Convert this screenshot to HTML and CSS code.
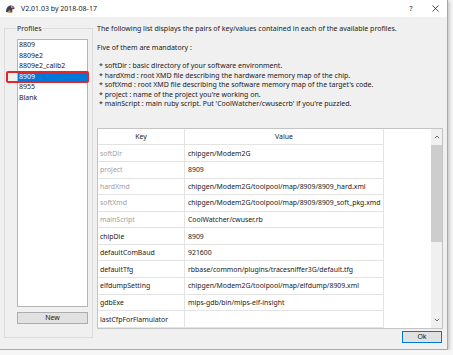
FILE: index.html
```html
<!DOCTYPE html>
<html lang="en">
<head>
    <meta charset="UTF-8">
    <title>V2.01.03 by 2018-08-17</title>
    <link rel="stylesheet" href="styles.css">
</head>
<body>

    <div class="window">

        <!-- Title bar -->
        <div class="titlebar">
            <svg class="app-icon" viewBox="0 0 10 10">
                <path d="M1 8 C1 4 3 1.5 6 1.5 C8 1.5 9.5 3 9.5 5 L7 5.5 L7.5 8.5 Z" fill="#35415c"/>
                <path d="M6.5 2 L9.5 3.5 L7.5 5 Z" fill="#d9482b"/>
                <path d="M2 8.5 L5 5.5 L6 9 Z" fill="#e8912d"/>
                <circle cx="6.8" cy="3" r="0.7" fill="#fff"/>
            </svg>
            <span class="title">V2.01.03 by 2018-08-17</span>
            <span class="tb-btn">?</span>
            <span class="tb-btn">
                <svg class="close-x" viewBox="0 0 8 8"><path d="M0.5 0.5 L7.5 7.5 M7.5 0.5 L0.5 7.5" stroke="#222" stroke-width="0.9"/></svg>
            </span>
        </div>

        <div class="client">

            <!-- Profiles list -->
            <fieldset class="profiles">
                <legend>Profiles</legend>
                <ul class="listbox">
                    <li>8809</li>
                    <li>8809e2</li>
                    <li>8809e2_calib2</li>
                    <li class="selected">8909<span class="mark"></span></li>
                    <li>8955</li>
                    <li>Blank</li>
                </ul>
                <button class="btn btn-new">New</button>
            </fieldset>

            <!-- Description and key/value grid -->
            <div class="main">
                <p class="line">The following list displays the pairs of key/values contained in each of the available profiles.</p>
                <p class="line gap">Five of them are mandatory :</p>
                <ul class="bullets">
                    <li>* softDir : basic directory of your software environment.</li>
                    <li>* hardXmd : root XMD file describing the hardware memory map of the chip.</li>
                    <li>* softXmd : root XMD file describing the software memory map of the target's code.</li>
                    <li>* project : name of the project you're working on.</li>
                    <li>* mainScript : main ruby script. Put 'CoolWatcher/cwusecrb' if you're puzzled.</li>
                </ul>

                <div class="grid">
                    <div class="grid-body">
                        <table class="kv">
                            <colgroup>
                                <col class="col-key">
                                <col class="col-value">
                            </colgroup>
                            <tr><th>Key</th><th>Value</th></tr>
                            <tr class="fixed"><td>softDir</td><td>chipgen/Modem2G</td></tr>
                            <tr class="fixed"><td>project</td><td>8909</td></tr>
                            <tr class="fixed"><td>hardXmd</td><td>chipgen/Modem2G/toolpool/map/8909/8909_hard.xml</td></tr>
                            <tr class="fixed"><td>softXmd</td><td>chipgen/Modem2G/toolpool/map/8909/8909_soft_pkg.xmd</td></tr>
                            <tr class="fixed"><td>mainScript</td><td>CoolWatcher/cwuser.rb</td></tr>
                            <tr><td>chipDie</td><td>8909</td></tr>
                            <tr><td>defaultComBaud</td><td>921600</td></tr>
                            <tr><td>defaultTfg</td><td>rbbase/common/plugins/tracesniffer3G/default.tfg</td></tr>
                            <tr><td>elfdumpSetting</td><td>chipgen/Modem2G/toolpool/map/elfdump/8909.xml</td></tr>
                            <tr><td>gdbExe</td><td>mips-gdb/bin/mips-elf-insight</td></tr>
                            <tr><td>lastCfpForFlamulator</td><td></td></tr>
                        </table>
                    </div>
                    <div class="scrollbar">
                        <div class="sb-arrow">
                            <svg viewBox="0 0 6 4"><path d="M0.8 3.2 L3 1 L5.2 3.2" fill="none" stroke="#606060" stroke-width="0.9"/></svg>
                        </div>
                        <div class="sb-thumb"></div>
                        <div class="sb-track"></div>
                        <div class="sb-arrow">
                            <svg viewBox="0 0 6 4"><path d="M0.8 0.8 L3 3 L5.2 0.8" fill="none" stroke="#606060" stroke-width="0.9"/></svg>
                        </div>
                    </div>
                </div>

                <div class="actions">
                    <button class="btn btn-ok">Ok</button>
                </div>
            </div>

        </div>
    </div>

</body>
</html>
```

FILE: styles.css
```css
* {
    box-sizing: border-box;
}

body {
    margin: 0;
    background-color: #f6f6f6;
    font-family: "Noto Sans", "Liberation Sans", sans-serif;
    font-size: 7px;
    color: #1a1a1a;
}

/* Dialog window */
.window {
    width: 448px;
    height: 350px;
    display: flex;
    flex-direction: column;
    background-color: #f0f0f0;
    border-right: 1px solid #a9a9a9;
    border-bottom: 1px solid #a9a9a9;
    box-shadow: 1px 1px 4px rgba(0, 0, 0, 0.25);
}

/* Title bar */
.titlebar {
    height: 17px;
    display: flex;
    align-items: center;
    padding-left: 5px;
    background-color: #fff;
}

.app-icon {
    width: 10px;
    height: 10px;
    margin-right: 6px;
}

.title {
    flex: 1;
}

.tb-btn {
    width: 24px;
    display: flex;
    justify-content: center;
    align-items: center;
    font-size: 7px;
    color: #222;
}

.close-x {
    width: 7px;
    height: 7px;
}

/* Client area */
.client {
    flex: 1;
    display: flex;
    padding: 7px 4px 0 4px;
}

/* Profiles group box */
.profiles {
    margin: 0;
    width: 89px;
    align-self: flex-start;
    padding: 6px 4px 13px 12px;
    border: 1px solid #dcdcdc;
}

.profiles legend {
    margin-left: -1px;
    padding: 0 1px;
    line-height: 9px;
}

.listbox {
    height: 268px;
    margin: 0;
    padding: 0;
    list-style: none;
    background-color: #fff;
    border: 1px solid #b5b5b5;
}

.listbox li {
    position: relative;
    line-height: 10.5px;
    padding-left: 1px;
}

.listbox li.selected {
    background-color: #0078d7;
    color: #fff;
}

/* red highlight drawn over the selected profile */
.mark {
    position: absolute;
    left: -12px;
    right: -2px;
    top: -1px;
    bottom: -1px;
    border: 2px solid #e3262b;
    border-radius: 2px;
}

/* Buttons */
.btn {
    display: block;
    padding: 0;
    font-family: inherit;
    font-size: 7px;
    line-height: 10px;
    color: #1a1a1a;
    background-color: #e1e1e1;
    border: 1px solid #adadad;
}

.btn-new {
    width: 71px;
    height: 12px;
    margin-top: 5px;
}

.btn-ok {
    width: 40px;
    height: 12px;
    border-color: #0078d7;
}

/* Right column */
.main {
    flex: 1;
    margin-left: 4px;
    display: flex;
    flex-direction: column;
}

.line {
    margin: 0;
    line-height: 9.6px;
}

.line.gap {
    margin-top: 9.4px;
}

.bullets {
    margin: 8.4px 0 0 0;
    padding: 0 0 0 2px;
    list-style: none;
    line-height: 9.6px;
}

/* Key / value grid */
.grid {
    height: 201px;
    margin-top: 18.8px;
    display: flex;
    border: 1px solid #c4c4c4;
    background-color: #fff;
}

.grid-body {
    flex: 1;
    overflow: hidden;
}

.kv {
    width: 286px;
    table-layout: fixed;
    border-collapse: separate;
    border-spacing: 0;
    font-size: 6.9px;
}

.col-key {
    width: 87px;
}

.col-value {
    width: 199px;
}

.kv th,
.kv td {
    height: 16.6px;
    padding: 0 0 0 2px;
    font-weight: normal;
    text-align: left;
    white-space: nowrap;
    overflow: hidden;
    border-right: 1px solid #e3e3e3;
    border-bottom: 1px solid #e3e3e3;
}

.kv td + td {
    padding-left: 3px;
}

.kv th {
    text-align: center;
    padding: 0;
}

.kv tr.fixed td:first-child {
    color: #a0a0a0;
}

/* Scrollbar */
.scrollbar {
    width: 11px;
    display: flex;
    flex-direction: column;
    background-color: #f0f0f0;
}

.sb-arrow {
    height: 16px;
    display: flex;
    justify-content: center;
    align-items: center;
}

.sb-arrow svg {
    width: 6px;
    height: 4px;
}

.sb-thumb {
    height: 97px;
    background-color: #cdcdcd;
}

.sb-track {
    flex: 1;
}

.actions {
    display: flex;
    justify-content: flex-end;
    margin-top: 2px;
    padding-right: 1px;
}
```
